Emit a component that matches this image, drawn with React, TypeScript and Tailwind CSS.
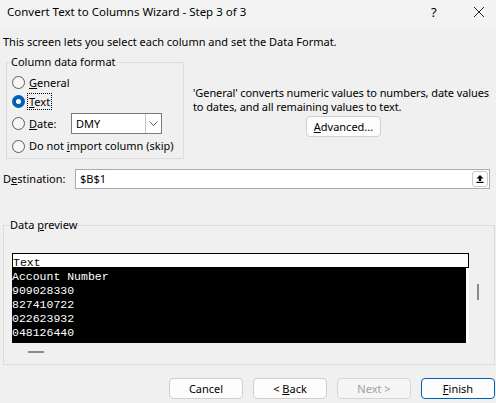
import React from 'react';

const ui = { fontFamily: '"Noto Sans", "Liberation Sans", sans-serif' };
const mono = { fontFamily: '"Liberation Mono", "Courier New", monospace' };

function Radio({ checked = false }: { checked?: boolean }) {
  return checked ? (
    <span className="w-[13px] h-[13px] rounded-full bg-[#005fb8] flex items-center justify-center shrink-0">
      <span className="w-[5px] h-[5px] rounded-full bg-white" />
    </span>
  ) : (
    <span className="w-[13px] h-[13px] rounded-full border border-[#5a5a5a] bg-[#f7f7f7] shrink-0" />
  );
}

function Btn({ children, primary = false, disabled = false }: { children: React.ReactNode; primary?: boolean; disabled?: boolean }) {
  return (
    <div
      className={
        'w-[74px] h-[21px] rounded-[4px] flex items-center justify-center ' +
        (primary
          ? 'border border-[#005fb8] bg-[#fdfdfd] text-black'
          : disabled
          ? 'border border-[#d6d6d6] bg-[#f5f5f5] text-[#a0a0a0]'
          : 'border border-[#d0d0d0] bg-[#fdfdfd] text-black')
      }
    >
      {children}
    </div>
  );
}

const rows = ['Account Number', '909028330', '827410722', '022623932', '048126440'];

export default function App() {
  return (
    <div className="w-[496px] h-[403px] bg-[#f0f0f0] text-[11px] leading-[16px] text-black overflow-hidden flex flex-col" style={ui}>
      {/* title bar */}
      <div className="h-[27px] bg-[#f3f3f3] flex items-start pt-[4px] pl-[7px] shrink-0">
        <span className="flex-1 text-[11.5px]">Convert Text to Columns Wizard - Step 3 of 3</span>
        <span className="w-[10px] text-[13px] mr-[32px]">?</span>
        <svg width="12" height="12" viewBox="0 0 12 12" className="mt-[2px] mr-[11px]">
          <path d="M1 1 L11 11 M11 1 L1 11" stroke="#222" strokeWidth="1" />
        </svg>
      </div>

      <div className="pl-[3px] mt-[7px]">This screen lets you select each column and set the Data Format.</div>

      <div className="flex mt-[12px]">
        {/* column data format group */}
        <div className="relative ml-[6px] w-[178px] h-[97px] border border-[#dcdcdc] shrink-0">
          <span className="absolute -top-[9px] left-[3px] px-[1px] bg-[#f0f0f0]">Column data format</span>
          <div className="flex flex-col pt-[10px] pl-[5px]">
            <div className="h-[19px] flex items-center gap-[4px]">
              <Radio />
              <span><u>G</u>eneral</span>
            </div>
            <div className="h-[19px] flex items-center gap-[2px]">
              <Radio checked />
              <span className="border border-dotted border-black px-[1px] leading-[15px]"><u>T</u>ext</span>
            </div>
            <div className="h-[25px] flex items-center gap-[4px]">
              <Radio />
              <span className="w-[38px]"><u>D</u>ate:</span>
              <div className="w-[91px] h-[21px] bg-white border border-[#7a7a7a] flex items-center">
                <span className="flex-1 pl-[4px]">DMY</span>
                <div className="w-[16px] h-full border-l border-[#c4c4c4] flex items-center justify-center">
                  <svg width="9" height="5" viewBox="0 0 9 5">
                    <path d="M0.5 0.5 L4.5 4.5 L8.5 0.5" fill="none" stroke="#606060" strokeWidth="1" />
                  </svg>
                </div>
              </div>
            </div>
            <div className="h-[20px] flex items-center gap-[4px]">
              <Radio />
              <span className="whitespace-nowrap">Do not <u>i</u>mport column (skip)</span>
            </div>
          </div>
        </div>

        {/* explanation */}
        <div className="ml-[9px] pt-[24px] w-[297px] flex flex-col items-center">
          <div className="leading-[14px] w-full whitespace-nowrap tracking-[-0.1px]">
            'General' converts numeric values to numbers, date values
            <br />
            to dates, and all remaining values to text.
          </div>
          <div className="mt-[2px] ml-[4px] w-[75px] h-[21px] rounded-[4px] border border-[#d0d0d0] bg-[#fdfdfd] flex items-center justify-center">
            <span><u>A</u>dvanced...</span>
          </div>
        </div>
      </div>

      {/* destination */}
      <div className="flex items-center mt-[10px] pl-[3px]">
        <span className="w-[72px]">D<u>e</u>stination:</span>
        <div className="w-[415px] h-[20px] bg-white border border-[#ababab] flex items-center justify-between">
          <span className="pl-[4px]">$B$1</span>
          <div className="w-[16px] h-[16px] mr-[1px] rounded-[3px] border border-[#c8c8c8] flex items-center justify-center">
            <svg width="8" height="8" viewBox="0 0 8 8">
              <path d="M4 0 L0.5 3.5 H2.8 V6 H5.2 V3.5 H7.5 Z" fill="#000" />
              <rect x="0.5" y="6.8" width="7" height="1.2" fill="#000" />
            </svg>
          </div>
        </div>
      </div>

      {/* data preview group */}
      <div className="relative ml-[3px] mt-[36px] w-[492px] h-[140px] border border-[#dcdcdc] shrink-0">
        <span className="absolute -top-[9px] left-[5px] px-[1px] bg-[#f0f0f0]">
          Data <u>p</u>review
        </span>
        <div className="flex pt-[27px] pl-[8px]">
          <div className="w-[457px] flex flex-col">
            <div className="h-[15px] border border-black bg-white overflow-hidden text-[11.5px] leading-[14px] pt-[2px] text-black" style={mono}>
              Text
            </div>
            <div className="h-[75px] bg-black border-r-[3px] border-white pt-[2px] text-[11.5px] leading-[14px] text-white" style={mono}>
              {rows.map((r) => (
                <div key={r}>{r}</div>
              ))}
            </div>
          </div>
          <div className="ml-[8px] mt-[31px] w-[2px] h-[16px] bg-[#8a8a8a]" />
        </div>
        <div className="ml-[24px] mt-[8px] w-[16px] h-[2px] bg-[#8a8a8a]" />
      </div>

      {/* buttons */}
      <div className="flex justify-end gap-[10px] mt-[13px] pr-[1px]">
        <Btn>Cancel</Btn>
        <Btn>&lt;&nbsp;<u>B</u>ack</Btn>
        <Btn disabled>Next &gt;</Btn>
        <Btn primary><u>F</u>inish</Btn>
      </div>
    </div>
  );
}
